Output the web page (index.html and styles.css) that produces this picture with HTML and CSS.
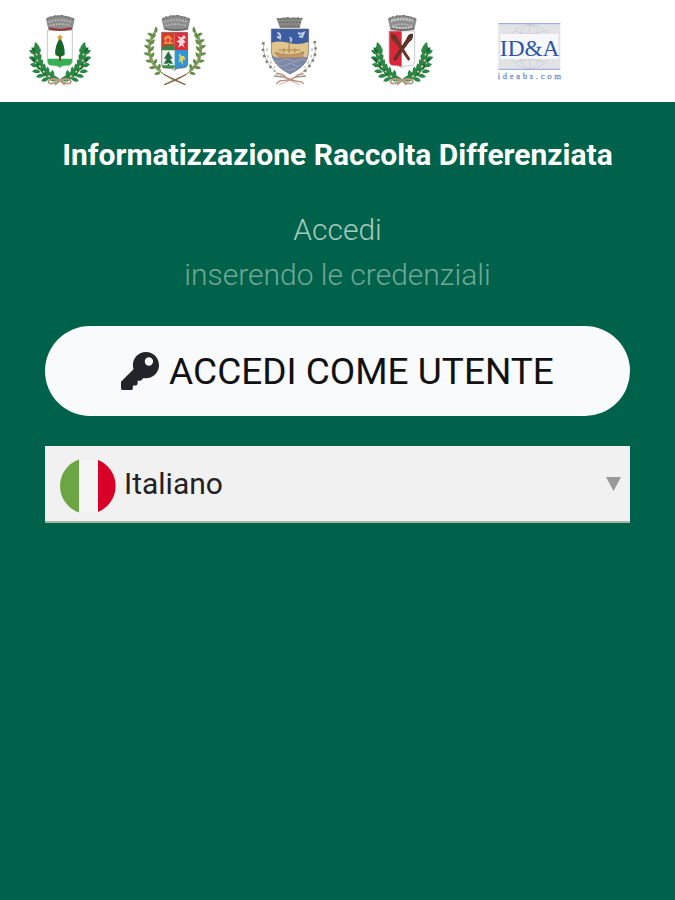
FILE: index.html
```html
<!DOCTYPE html>
<html lang="it">
<head>
<meta charset="utf-8">
<meta name="viewport" content="width=device-width, initial-scale=1">
<title>Informatizzazione Raccolta Differenziata</title>
<link rel="stylesheet" href="styles.css">
</head>
<body>
<svg class="defs" width="0" height="0" aria-hidden="true">
  <defs>
    <g id="leaf"><path d="M0 2Q-13-8-7-23Q10-14 0 2Z"/></g>
    <g id="branch">
      <path d="M50 130Q46 190 110 226" fill="none" stroke="#2f8746" stroke-width="18" stroke-linecap="round"/>
      <g fill="#2c8744">
        <use href="#leaf" transform="translate(52 134)"/>
        <use href="#leaf" transform="translate(48 148) rotate(-42)"/>
        <use href="#leaf" transform="translate(49 150) rotate(48)"/>
        <use href="#leaf" transform="translate(48 166) rotate(-48)"/>
        <use href="#leaf" transform="translate(52 168) rotate(45)"/>
        <use href="#leaf" transform="translate(53 184) rotate(-58)"/>
        <use href="#leaf" transform="translate(58 184) rotate(40)"/>
        <use href="#leaf" transform="translate(60 200) rotate(-70)"/>
        <use href="#leaf" transform="translate(68 198) rotate(30)"/>
        <use href="#leaf" transform="translate(72 212) rotate(-80)"/>
        <use href="#leaf" transform="translate(80 208) rotate(25)"/>
        <use href="#leaf" transform="translate(86 220) rotate(-95)"/>
        <use href="#leaf" transform="translate(96 218) rotate(20)"/>
      </g>
      <g fill="#176c31">
        <use href="#leaf" transform="translate(46 142) rotate(-20) scale(.8)"/>
        <use href="#leaf" transform="translate(45 174) rotate(-10) scale(.8)"/>
        <use href="#leaf" transform="translate(58 194) scale(.9)"/>
        <use href="#leaf" transform="translate(74 212) scale(.9)"/>
      </g>
      <path d="M48 146l3 5M50 164l4 5M57 182l5 5M69 198l5 4M84 212l6 4M98 222l5 3" stroke="#ddc9ae" stroke-width="5"/>
    </g>
    <g id="crown">
      <path d="M78 42Q120 20 164 42L157 74Q120 82 85 74Z" fill="#8d8d8d"/>
      <path d="M80 43l10-7 8 3 8-7 9 3 10-3 9 4 9-1 8 5 11 3" fill="none" stroke="#777" stroke-width="5" stroke-dasharray="8 4"/>
      <path d="M86 51q34-12 70 0M90 62q30-9 62 0" fill="none" stroke="#bdbdbd" stroke-width="5" stroke-dasharray="5 4"/>
      <path d="M88 71q32 8 68 0" fill="none" stroke="#666" stroke-width="4"/>
    </g>
    <g id="ribbon" fill="none" stroke="#b69a82" stroke-width="5">
      <path d="M119 226q-30-10-34 4 4 14 34-4 30-10 34 4-4 14-34-4l-14 14M119 226l15 14"/>
      <path d="M92 234l18-7M128 227l18 7" stroke="#e1d0c4" stroke-width="3"/>
    </g>
    <g id="sprig">
      <path d="M61 76Q28 120 50 170Q72 211 150 239" fill="none" stroke="#806942" stroke-width="3"/>
      <path d="M56 88Q32 125 50 166Q58 184 76 198" fill="none" stroke="#84a66a" stroke-width="9"/>
      <g fill="#638e48">
        <use href="#leaf" transform="translate(62 84) rotate(20) scale(.8)"/>
        <use href="#leaf" transform="translate(54 94) rotate(-42) scale(.8)"/>
        <use href="#leaf" transform="translate(52 100) rotate(45) scale(.8)"/>
        <use href="#leaf" transform="translate(48 112) rotate(-48) scale(.8)"/>
        <use href="#leaf" transform="translate(47 118) rotate(55) scale(.8)"/>
        <use href="#leaf" transform="translate(44 130) rotate(-45) scale(.8)"/>
        <use href="#leaf" transform="translate(45 138) rotate(55) scale(.8)"/>
        <use href="#leaf" transform="translate(44 150) rotate(-55) scale(.8)"/>
        <use href="#leaf" transform="translate(47 158) rotate(50) scale(.8)"/>
        <use href="#leaf" transform="translate(50 170) rotate(-65) scale(.8)"/>
        <use href="#leaf" transform="translate(56 178) rotate(45) scale(.8)"/>
        <use href="#leaf" transform="translate(61 188) rotate(-75) scale(.8)"/>
        <use href="#leaf" transform="translate(69 194) rotate(35) scale(.8)"/>
        <use href="#leaf" transform="translate(76 204) rotate(-85) scale(.8)"/>
      </g>
      <path d="M44 112l5 4M40 136l5 4M44 160l5 4M58 184l5 4" stroke="#a9713f" stroke-width="4"/>
    </g>
  </defs>
</svg>

<header class="logos">
  <svg class="crest" viewBox="0 0 240 270" role="img" aria-label="Stemma comunale con cipresso">
    <use href="#branch"/><use href="#branch" transform="translate(240 0) scale(-1 1)"/>
    <path d="M82 76H157V168Q157 181 144 182Q124 182 119 189Q114 182 94 182Q82 181 82 168Z" fill="#fff" stroke="#aaa" stroke-width="2"/>
    <path d="M83 161H156V168Q156 180 144 181Q124 181 119 188Q114 181 94 181Q83 180 83 168Z" fill="#35b052"/>
    <path d="M117 150h6v17h-6z" fill="#704a24"/>
    <path d="M120 98Q103 124 106 149Q120 161 134 149Q136 123 120 98Z" fill="#176528"/>
    <path d="M120 86l3 8 7 1-6 5 2 7-6-4-6 4 1-7-5-5 7-1z" fill="#d3a02d"/>
    <use href="#crown"/><path d="M88 70q32 8 66 0" fill="none" stroke="#9c3432" stroke-width="6"/>
    <use href="#ribbon"/>
  </svg>
  <svg class="crest" viewBox="0 0 240 270" role="img" aria-label="Stemma comunale inquartato">
    <use href="#sprig"/><use href="#sprig" transform="translate(240 0) scale(-1 1)"/>
    <path d="M80 82H119V135H80z" fill="#d63b2c"/><path d="M119 82H158V135H119z" fill="#df2c3b"/>
    <path d="M80 135h39v60q-5-6-23-6-15 0-16-13z" fill="#eef5ed"/><path d="M119 135h39v41q-1 13-16 13-18 0-23 6z" fill="#3095d5"/>
    <path d="M80 128q18-14 39-4v12H80z" fill="#388343"/>
    <path d="M86 101h8l5-8 5 8h9M92 94v17M105 94v17M87 114h27" fill="none" stroke="#e9a34e" stroke-width="4"/>
    <path d="M128 92l10 6 9-8 6 9-9 4 8 8-8 5 5 12-9-7-10 7 3-14-9-5 10-4z" fill="#f6dadd"/>
    <path d="M100 139l-13 22h8l-9 15h28l-9-15h8zM98 174h5v11h-5z" fill="#286c47"/>
    <path d="M80 181h39v9H84z" fill="#399650"/>
    <path d="M132 144l8 8 8 2 3 12-7-3-1 18-6-13-7 5 4-14z" fill="#dbd565"/>
    <path d="M80 82H158V176Q158 188 142 189Q124 189 119 196Q113 189 96 189Q80 188 80 176Z" fill="none" stroke="#70524b" stroke-width="2"/>
    <use href="#crown" transform="translate(2 0)"/>
    <path d="M86 208l66 31M154 208L87 239" stroke="#80633e" stroke-width="3"/>
  </svg>
  <svg class="crest" viewBox="0 0 240 270" role="img" aria-label="Stemma comunale con nave">
    <path d="M42 110Q34 156 66 190Q90 215 149 239M194 110Q204 156 171 190Q148 215 88 239" fill="none" stroke="#bab8b0" stroke-width="3"/>
    <g stroke="#7b8774" stroke-width="8" stroke-dasharray="7 12" fill="none"><path d="M40 112Q32 160 74 199"/><path d="M193 108Q208 158 162 201"/></g>
    <g stroke="#c5c7bf" stroke-width="5" stroke-dasharray="8 12" fill="none"><path d="M51 130Q50 164 76 188"/><path d="M186 130Q188 164 161 188"/></g>
    <path d="M64 72H176V142Q174 181 120 207Q67 181 64 142Z" fill="#dfc58a"/>
    <path d="M64 72H176V110Q146 121 119 114Q91 105 64 113Z" fill="#3d5da1"/>
    <path d="M66 152Q94 164 119 157Q148 150 174 158Q165 186 120 207Q78 187 66 152Z" fill="#7e89aa"/>
    <path d="M73 166q12 9 24 0t24 0 24 0 22 0M85 180q12 8 24 0t24 0 22 0M101 192q12 6 36 0" fill="none" stroke="#969fb9" stroke-width="4"/>
    <path d="M75 142q43 17 87-1l-8 17H88zM86 135h64M101 130v14M117 110v34M134 130v14" fill="#c49d66" stroke="#aa8257" stroke-width="3"/>
    <path d="M82 83q12 4 8 17l-9-5M119 97q9 7 2 13M144 84q9 4 17 0l-5 12-9-2" fill="none" stroke="#bccbe2" stroke-width="6"/>
    <path d="M64 72H176V142Q174 181 120 207Q67 181 64 142Z" fill="none" stroke="#606b83" stroke-width="2"/>
    <path d="M79 38l9 3v-3l10 2v-3l10 1v-2h10v2h10v-2l9 2 10-2v3l10-1-8 31H90z" fill="#8a8986"/>
    <path d="M81 42l77-1M87 52h66M91 63h57" stroke="#686966" stroke-width="3" stroke-dasharray="7 3"/>
    <path d="M78 207q18-4 25 6t39 16q15-1 18 8M161 207q-15-2-25 8t-34 11q-18 0-22 12" fill="none" stroke="#c98876" stroke-width="4"/>
    <path d="M72 213l30 3M136 216l32-3" stroke="#8f9c85" stroke-width="4"/>
  </svg>
  <svg class="crest" viewBox="9 0 240 270" role="img" aria-label="Stemma comunale rosso e bianco">
    <use href="#branch"/><use href="#branch" transform="translate(240 0) scale(-1 1)"/>
    <path d="M81 78H158V168Q158 181 144 182Q124 182 119 189Q114 182 94 182Q81 181 81 168Z" fill="#fff" stroke="#aaa" stroke-width="2"/>
    <path d="M82 79h37v108q-5-6-25-6-12-1-12-13z" fill="#db2639"/>
    <path d="M87 87q14-3 20 15l38 60-6 6-40-57q-14-8-12-24z" fill="#643625"/>
    <path d="M153 87q-14-3-20 15L94 162l6 6 42-57q13-8 11-24z" fill="#542e23"/>
    <path d="M94 96l42 61M147 96l-43 61" stroke="#7f4b35" stroke-width="2"/>
    <use href="#crown"/><path d="M88 46q32-10 65 0M92 65q31 8 58 0" fill="none" stroke="#ccc" stroke-width="6" stroke-dasharray="6 3"/>
    <use href="#ribbon"/>
  </svg>
  <svg class="brand" viewBox="-15 0 270 270" role="img" aria-label="ID&amp;A ideabs.com">
    <path d="M40 54H226V194H40z" fill="#e2e3e7"/>
    <g fill="none" stroke="#c2c5cb" stroke-width="2"><circle cx="134" cy="125" r="66"/><ellipse cx="134" cy="125" rx="34" ry="66"/><path d="M134 59v132M77 92h114M77 158h114M88 77q46 20 92 0M88 173q46-20 92 0"/></g>
    <path d="M46 87H220V162H46z" fill="#f8f8fb"/>
    <path d="M40 56H226M40 193H226" stroke="#8ca8dc" stroke-width="3"/>
    <text class="brand-name" x="134" y="152" text-anchor="middle">ID&amp;A</text>
    <text class="brand-site" x="137" y="221" text-anchor="middle">ideabs.com</text>
  </svg>
</header>

<main class="login">
  <h1 class="title">Informatizzazione Raccolta Differenziata</h1>
  <p class="lead">Accedi</p>
  <p class="hint">inserendo le credenziali</p>
  <button class="signin" type="button">
    <svg class="key" viewBox="0 0 512 512" aria-hidden="true"><path fill="currentColor" fill-rule="evenodd" d="M512 177c0 97-79 176-176 176-12 0-23-1-34-3l-25 28c-5 5-11 8-18 8h-35v40c0 13-11 24-24 24h-40v38c0 13-11 24-24 24H24c-13 0-24-11-24-24v-78c0-7 3-13 7-17l162-162c-6-17-9-35-9-55C160 79 239 0 336 0s176 79 176 177zM320 128a56 56 0 1 0 112 0 56 56 0 1 0-112 0z"/></svg>
    <span>ACCEDI COME UTENTE</span>
  </button>
  <div class="language">
    <svg class="flag" viewBox="0 0 56 56" aria-hidden="true"><path d="M19 1.500v53A28 28 0 0 1 19 1.500z" fill="#6ba544"/><path d="M19 2v52H38V2z" fill="#f5f5f5"/><path d="M38 2v52A28 28 0 0 0 38 2z" fill="#d80027"/></svg>
    <select class="choice" aria-label="Lingua"><option>Italiano</option></select>
    <svg class="arrow" viewBox="0 0 15 14" aria-hidden="true"><path d="M0 0h15L7.500 14z" fill="#999"/></svg>
  </div>
</main>
</body>
</html>
```
FILE: styles.css
```css
* {
  box-sizing: border-box;
}

body {
  margin: 0;
  min-height: 100vh;
  background: #00624a;
  color: #fff;
  font-family: Roboto, "Liberation Sans", sans-serif;
}

.defs {
  position: absolute;
}

.logos {
  display: flex;
  gap: 35px;
  padding: 5px 20px 7px;
  background: #fff;
}

.crest {
  width: 80px;
  height: 90px;
}

.brand {
  width: 90px;
  height: 90px;
}

.brand-name {
  font: 70px "Liberation Serif", serif;
  fill: #2856ad;
}

.brand-site {
  font: 26px "Liberation Serif", serif;
  letter-spacing: 8px;
  fill: #7797cf;
  stroke: #7797cf;
  stroke-width: 1px;
}

.login {
  padding: 30px 45px;
  text-align: center;
}

.title {
  margin: 0 -10px 30px;
  font-size: 30px;
  font-weight: 700;
  line-height: 45px;
}

.lead,
.hint {
  margin: 0;
  font-size: 30px;
  font-weight: 300;
  line-height: 45px;
}

.lead {
  color: #a6cabf;
}

.hint {
  color: #71a796;
}

.signin {
  display: flex;
  align-items: center;
  justify-content: center;
  gap: 10px;
  width: 100%;
  height: 90px;
  margin: 29px 0 30px;
  padding: 0;
  border: 0;
  border-radius: 45px;
  background: #f8fafc;
  color: #212529;
  font-family: inherit;
  font-size: 37px;
  cursor: pointer;
}

.signin span {
  color: #111;
}

.key {
  width: 38px;
  height: 38px;
}

.language {
  display: flex;
  align-items: center;
  gap: 8px;
  height: 77px;
  padding: 0 9px 0 15px;
  background: #f1f1f1;
  border-bottom: 2px solid #aab5a8;
}

.flag {
  width: 56px;
  height: 56px;
  margin-top: 5px;
}

.choice {
  flex: 1;
  min-width: 0;
  height: 60px;
  padding: 0;
  border: 0;
  appearance: none;
  background: transparent;
  color: #222;
  font-family: inherit;
  font-size: 30px;
}

.arrow {
  width: 15px;
  height: 14px;
}
```
